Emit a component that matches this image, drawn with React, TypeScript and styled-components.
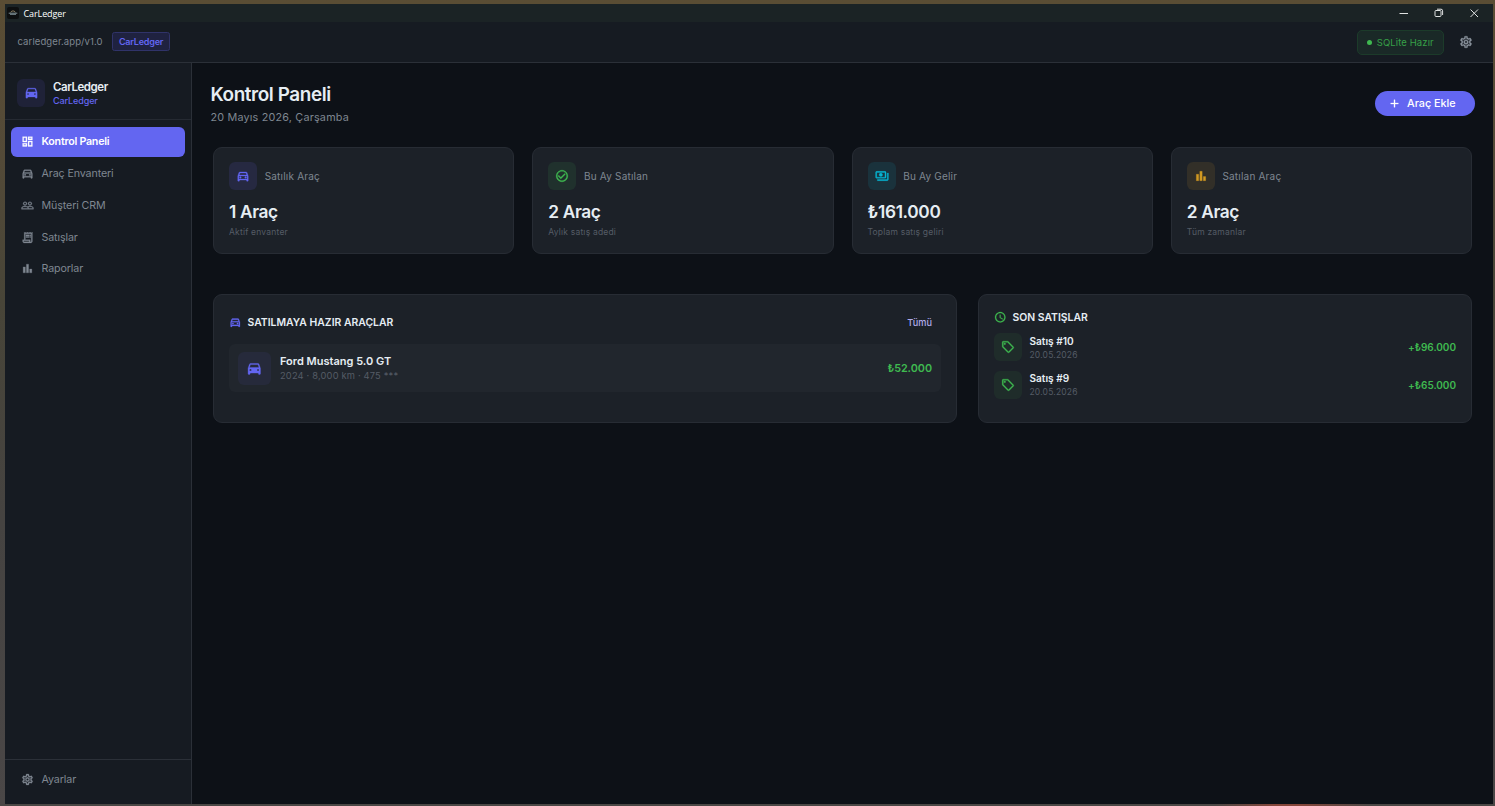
import React from "react";
import styled, { createGlobalStyle } from "styled-components";
import {
  MdAdd,
  MdBarChart,
  MdCheckCircleOutline,
  MdDirectionsCar,
  MdOutlineDashboard,
  MdOutlineDirectionsCar,
  MdOutlinePayments,
  MdOutlineReceiptLong,
  MdOutlineSell,
  MdOutlineSettings,
  MdPeopleOutline,
  MdSchedule,
} from "react-icons/md";

const c = {
  bg: "#0d1117",
  surface: "#161b22",
  card: "#1c2128",
  line: "#2b3038",
  text: "#e6edf3",
  muted: "#7f8791",
  faint: "#555c66",
  primary: "#6366f1",
  green: "#3fb950",
};

const GlobalStyle = createGlobalStyle`
  * { box-sizing: border-box; }
  body { margin: 0; font-family: Inter, "Liberation Sans", sans-serif; color: ${c.text}; }
  svg { display: block; flex: none; }
  svg[viewBox="0 0 24 24"] { stroke-width: 0.5px; }
  svg[viewBox="0 0 24 24"] [fill="none"] { stroke: none; }
  button { font: inherit; border: 0; padding: 0; }
`;

const Desktop = styled.div`
  width: 1495px;
  height: 806px;
  padding: 4px 2px 2px 5px;
  overflow: hidden;
  background:
    linear-gradient(90deg, #4a4745 0, #4a4745 1215px, #85463a 1275px, #85463a 1300px, #4a4745 1370px) bottom / 100% 2px no-repeat,
    linear-gradient(180deg, #5a4d34 0, #534a38 160px, #484538 300px, #454341 520px, #4a4747 100%);
`;

const Window = styled.div`
  height: 100%;
  display: flex;
  flex-direction: column;
  background: ${c.bg};
`;

const TitleBar = styled.div`
  height: 18px;
  flex: none;
  display: flex;
  align-items: center;
  justify-content: space-between;
  padding: 0 14px 0 2px;
  background: #1b2325;
`;

const AppTitle = styled.div`
  display: flex;
  align-items: center;
  gap: 4.5px;
  font: 400 9px "Open Sans", "Noto Sans", sans-serif;
  letter-spacing: -0.1px;
  color: #fff;
`;

const WindowButtons = styled.div`
  display: flex;
  align-items: center;
  gap: 25px;
  padding-bottom: 1px;
  color: #dfe1e1;
`;

const Toolbar = styled.div`
  height: 41px;
  flex: none;
  display: flex;
  align-items: center;
  justify-content: space-between;
  padding: 0 20.5px 0 12.5px;
  background: ${c.surface};
  border-bottom: 1px solid ${c.line};
`;

const ToolbarGroup = styled.div<{ $gap: number }>`
  display: flex;
  align-items: center;
  gap: ${(p) => p.$gap}px;
`;

const Address = styled.span`
  margin-top: -1px;
  font-size: 9.5px;
  letter-spacing: 0.1px;
  color: ${c.muted};
`;

const AppChip = styled.span`
  width: 58px;
  height: 19px;
  margin-top: -1px;
  padding-left: 0.6px;
  display: grid;
  place-items: center;
  font-size: 9px;
  font-weight: 600;
  letter-spacing: -0.2px;
  color: ${c.primary};
  background: #1f2240;
  border: 1px solid #303369;
  border-radius: 2.5px;
`;

const StatusChip = styled.span`
  width: 87px;
  height: 25px;
  display: flex;
  align-items: center;
  justify-content: center;
  gap: 4.5px;
  font-size: 9.5px;
  letter-spacing: 0.1px;
  color: #37a047;
  background: #1a2927;
  border: 1px solid #1c3b2a;
  border-radius: 5px;
`;

const Dot = styled.i`
  width: 5px;
  height: 5px;
  border-radius: 50%;
  background: ${c.green};
`;

const Body = styled.div`
  flex: 1;
  min-height: 0;
  display: flex;
`;

const Sidebar = styled.aside`
  width: 187px;
  flex: none;
  display: flex;
  flex-direction: column;
  background: ${c.surface};
  border-right: 1px solid ${c.line};
`;

const Brand = styled.div`
  height: 57px;
  display: flex;
  align-items: center;
  gap: 8px;
  padding: 3px 12px 0 12px;
  border-bottom: 1px solid #252a32;
`;

const Tile = styled.div<{ $size: number; $bg: string; $fg: string }>`
  width: ${(p) => p.$size}px;
  height: ${(p) => p.$size}px;
  flex: none;
  display: grid;
  place-items: center;
  border-radius: 6px;
  background: ${(p) => p.$bg};
  color: ${(p) => p.$fg};
`;

const BrandText = styled.div`
  padding-top: 1px;
`;

const BrandName = styled.div`
  font-size: 11.5px;
  line-height: 14px;
  font-weight: 600;
  letter-spacing: -0.45px;
`;

const BrandSub = styled.div`
  font-size: 9px;
  line-height: 13px;
  font-weight: 500;
  letter-spacing: -0.1px;
  color: ${c.primary};
`;

const Nav = styled.nav`
  flex: 1;
  display: flex;
  flex-direction: column;
  gap: 1.6px;
  padding: 6.6px 6px 0;
`;

const NavItem = styled.a<{ $active?: boolean }>`
  height: 30.2px;
  display: flex;
  align-items: center;
  gap: 8px;
  padding-left: 9.5px;
  border-radius: 6px;
  font-size: 10.7px;
  letter-spacing: ${(p) => (p.$active ? "-0.25px" : "-0.12px")};
  font-weight: ${(p) => (p.$active ? 600 : 400)};
  color: ${(p) => (p.$active ? "#fff" : c.muted)};
  background: ${(p) => (p.$active ? c.primary : "transparent")};
`;

const SidebarFooter = styled.div`
  height: 45px;
  padding: 4px 6px 0;
  border-top: 1px solid ${c.line};
`;

const Main = styled.main`
  flex: 1;
  min-width: 0;
  padding: 20px 18px 0;
`;

const PageHeader = styled.header`
  height: 64px;
  display: flex;
  justify-content: space-between;
  padding-left: 0.4px;
`;

const Title = styled.h1`
  margin: 0;
  font-size: 18.9px;
  line-height: 24px;
  font-weight: 600;
  letter-spacing: -0.4px;
`;

const DateLine = styled.div`
  margin-top: 3px;
  font-size: 10.8px;
  line-height: 15px;
  letter-spacing: 0.2px;
  color: ${c.muted};
`;

const AddButton = styled.button`
  width: 100px;
  height: 25px;
  margin-top: 8px;
  padding-left: 13px;
  display: flex;
  align-items: center;
  gap: 6px;
  border-radius: 13px;
  font-size: 10.8px;
  font-weight: 500;
  color: #fff;
  background: ${c.primary};
`;

const Stats = styled.section`
  display: grid;
  grid-template-columns: repeat(4, 1fr);
  gap: 18px;
  padding: 0 3px;
`;

const StatCard = styled.article`
  height: 107px;
  padding: 14px 15px;
  background: ${c.card};
  border: 1px solid #272c34;
  border-radius: 9px;
`;

const StatHead = styled.div`
  display: flex;
  align-items: center;
  gap: 7.7px;
  font-size: 10px;
  letter-spacing: 0.2px;
  color: ${c.muted};
`;

const StatValue = styled.div`
  margin-top: 10px;
  font-size: 17.3px;
  line-height: 24px;
  font-weight: 600;
  letter-spacing: -0.35px;
`;

const StatNote = styled.div`
  margin-top: 2px;
  font-size: 8.5px;
  line-height: 12px;
  letter-spacing: 0.2px;
  color: ${c.faint};
`;

const Panels = styled.section`
  display: grid;
  grid-template-columns: 744px 494px;
  gap: 21px;
  margin-top: 40px;
  padding: 0 3px;
`;

const Panel = styled.article<{ $top: number }>`
  height: 129.4px;
  padding: ${(p) => p.$top}px 15px 0;
  background: ${c.card};
  border: 1px solid #272c34;
  border-radius: 9px;
`;

const PanelHead = styled.div`
  height: 16px;
  display: flex;
  align-items: center;
  gap: 6px;
  font-size: 10.4px;
  font-weight: 600;
`;

const AllLink = styled.a`
  margin-left: auto;
  padding-right: 9px;
  font-size: 9.2px;
  font-weight: 500;
  color: #b0abe8;
`;

const CarRow = styled.div`
  height: 48px;
  margin-top: 14px;
  display: flex;
  align-items: center;
  gap: 9px;
  padding: 0 9px;
  background: #21262d;
  border-radius: 6px;
`;

const SaleRow = styled.div`
  height: 28px;
  margin-top: 9.3px;
  display: flex;
  align-items: center;
  gap: 7.5px;
`;

const ItemText = styled.div`
  margin-top: -1px;
`;

const ItemName = styled.div<{ $size: number }>`
  font-size: ${(p) => p.$size}px;
  line-height: 14px;
  font-weight: 600;
`;

const ItemMeta = styled.div<{ $size: number }>`
  margin-top: 1px;
  font-size: ${(p) => p.$size}px;
  line-height: 13px;
  letter-spacing: 0.18px;
  color: ${c.faint};
`;

const Amount = styled.div<{ $size: number }>`
  margin-left: auto;
  font-size: ${(p) => p.$size}px;
  font-weight: 600;
  letter-spacing: -0.03px;
  color: ${c.green};
`;

const Sales = styled.div`
  margin-top: -0.9px;
`;

const SaleText = styled.div`
  padding-top: 1px;
`;

const AppIcon = () => (
  <svg width="12" height="12" viewBox="0 0 12 12">
    <rect width="12" height="12" rx="2" fill="#0d0f10" />
    <path d="M3.7 5.4 4.8 4h2.4l1.1 1.4" fill="none" stroke="#b4a078" strokeWidth=".7" />
    <path d="M1.7 6.2h8.6M3 7.3h6" stroke="#9aaeb7" strokeWidth=".8" />
  </svg>
);

const nav = [
  { label: "Kontrol Paneli", Icon: MdOutlineDashboard, active: true },
  { label: "Araç Envanteri", Icon: MdOutlineDirectionsCar },
  { label: "Müşteri CRM", Icon: MdPeopleOutline },
  { label: "Satışlar", Icon: MdOutlineReceiptLong },
  { label: "Raporlar", Icon: MdBarChart },
];

const stats = [
  { label: "Satılık Araç", value: "1 Araç", note: "Aktif envanter", Icon: MdOutlineDirectionsCar, bg: "#262941", fg: "#6366f1" },
  { label: "Bu Ay Satılan", value: "2 Araç", note: "Aylık satış adedi", Icon: MdCheckCircleOutline, bg: "#20312d", fg: "#3fb950" },
  { label: "Bu Ay Gelir", value: "₺161.000", note: "Toplam satış geliri", Icon: MdOutlinePayments, bg: "#1a323c", fg: "#06b6d4" },
  { label: "Satılan Araç", value: "2 Araç", note: "Tüm zamanlar", Icon: MdBarChart, bg: "#322f28", fg: "#d29922" },
];

const sales = [
  { name: "Satış #10", date: "20.05.2026", amount: "+₺96.000" },
  { name: "Satış #9", date: "20.05.2026", amount: "+₺65.000" },
];

export default function App() {
  return (
    <Desktop>
      <GlobalStyle />
      <Window>
        <TitleBar>
          <AppTitle>
            <AppIcon />
            CarLedger
          </AppTitle>
          <WindowButtons>
            <svg width="10" height="10" viewBox="0 0 10 10" stroke="currentColor" fill="none">
              <path d="M.5 5.5H9" />
            </svg>
            <svg width="10" height="10" viewBox="0 0 10 10" stroke="currentColor" fill="none">
              <rect x="1" y="2.5" width="6" height="6" rx="1" />
              <path d="M3 1.2h4a1.6 1.6 0 0 1 1.6 1.6V7" />
            </svg>
            <svg width="10" height="10" viewBox="0 0 10 10" stroke="currentColor" fill="none">
              <path d="m1.5 1.5 7.5 7.5M9 1.5 1.5 9" />
            </svg>
          </WindowButtons>
        </TitleBar>
        <Toolbar>
          <ToolbarGroup $gap={9}>
            <Address>carledger.app/v1.0</Address>
            <AppChip>CarLedger</AppChip>
          </ToolbarGroup>
          <ToolbarGroup $gap={14.5}>
            <StatusChip>
              <Dot />
              SQLite Hazır
            </StatusChip>
            <MdOutlineSettings size={14} color="#8b949e" />
          </ToolbarGroup>
        </Toolbar>
        <Body>
          <Sidebar>
            <Brand>
              <Tile $size={28} $bg="#1f2238" $fg={c.primary}>
                <MdDirectionsCar size={15} />
              </Tile>
              <BrandText>
                <BrandName>CarLedger</BrandName>
                <BrandSub>CarLedger</BrandSub>
              </BrandText>
            </Brand>
            <Nav>
              {nav.map(({ label, Icon, active }) => (
                <NavItem key={label} $active={active}>
                  <Icon size={13} />
                  {label}
                </NavItem>
              ))}
            </Nav>
            <SidebarFooter>
              <NavItem>
                <MdOutlineSettings size={13} />
                Ayarlar
              </NavItem>
            </SidebarFooter>
          </Sidebar>
          <Main>
            <PageHeader>
              <div>
                <Title>Kontrol Paneli</Title>
                <DateLine>20 Mayıs 2026, Çarşamba</DateLine>
              </div>
              <AddButton>
                <MdAdd size={13} />
                Araç Ekle
              </AddButton>
            </PageHeader>
            <Stats>
              {stats.map(({ label, value, note, Icon, bg, fg }) => (
                <StatCard key={label}>
                  <StatHead>
                    <Tile $size={28} $bg={bg} $fg={fg}>
                      <Icon size={14} />
                    </Tile>
                    {label}
                  </StatHead>
                  <StatValue>{value}</StatValue>
                  <StatNote>{note}</StatNote>
                </StatCard>
              ))}
            </Stats>
            <Panels>
              <Panel $top={19}>
                <PanelHead>
                  <MdOutlineDirectionsCar size={12.5} color={c.primary} />
                  SATILMAYA HAZIR ARAÇLAR
                  <AllLink>Tümü</AllLink>
                </PanelHead>
                <CarRow>
                  <Tile $size={33} $bg="#262a3b" $fg={c.primary}>
                    <MdDirectionsCar size={16.5} />
                  </Tile>
                  <ItemText>
                    <ItemName $size={11}>Ford Mustang 5.0 GT</ItemName>
                    <ItemMeta $size={9.3}>2024 · 8,000 km · 475 ***</ItemMeta>
                  </ItemText>
                  <Amount $size={10.8}>₺52.000</Amount>
                </CarRow>
              </Panel>
              <Panel $top={14}>
                <PanelHead>
                  <MdSchedule size={12.5} color={c.green} />
                  SON SATIŞLAR
                </PanelHead>
                <Sales>
                  {sales.map((s) => (
                    <SaleRow key={s.name}>
                      <Tile $size={28} $bg="#1f2c2a" $fg={c.green}>
                        <MdOutlineSell size={14} />
                      </Tile>
                      <SaleText>
                        <ItemName $size={10.1}>{s.name}</ItemName>
                        <ItemMeta $size={8.5}>{s.date}</ItemMeta>
                      </SaleText>
                      <Amount $size={10}>{s.amount}</Amount>
                    </SaleRow>
                  ))}
                </Sales>
              </Panel>
            </Panels>
          </Main>
        </Body>
      </Window>
    </Desktop>
  );
}
